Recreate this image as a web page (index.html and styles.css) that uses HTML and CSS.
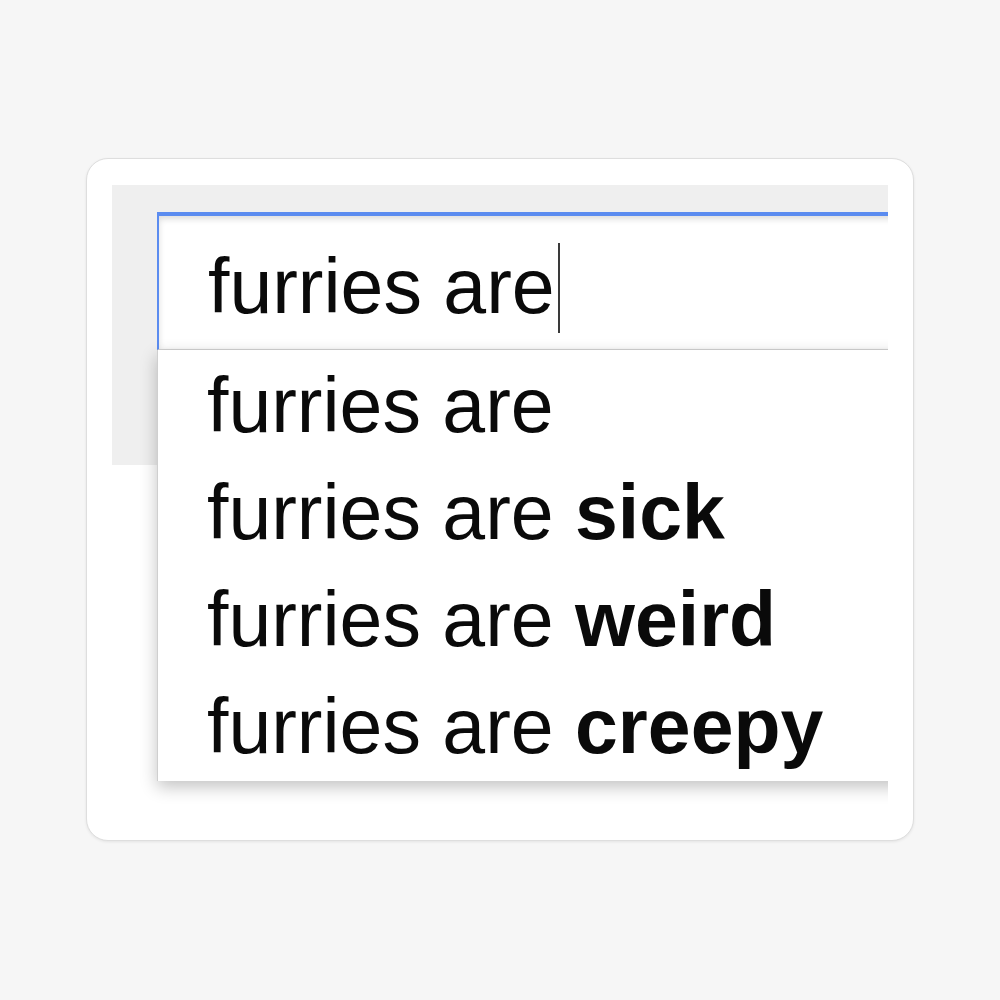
FILE: index.html
```html
<!DOCTYPE html>
<html lang="en">
<head>
  <meta charset="UTF-8">
  <title>furries are</title>
  <link rel="stylesheet" href="styles.css">
</head>
<body>
  <div class="sticker">
    <div class="shot">
      <div class="search">
        <div class="search-input">furries are<span class="caret"></span></div>
        <ul class="suggestions">
          <li>furries are</li>
          <li>furries are <b>sick</b></li>
          <li>furries are <b>weird</b></li>
          <li>furries are <b>creepy</b></li>
        </ul>
      </div>
    </div>
  </div>
</body>
</html>
```

FILE: styles.css
```css
body {
  margin: 0;
  height: 100vh;
  display: flex;
  justify-content: center;
  align-items: center;
  background: #f6f6f6;
  font-family: "Liberation Sans", Arial, sans-serif;
}

.sticker {
  box-sizing: border-box;
  width: 828px;
  height: 683px;
  margin-top: -1px;
  padding: 26px 25px 0;
  background: #fff;
  border: 1px solid #dedede;
  border-radius: 22px;
  box-shadow: 0 1px 3px rgba(0, 0, 0, 0.08);
}

.shot {
  height: 640px;
  padding: 27px 0 0 45px;
  box-sizing: border-box;
  overflow: hidden;
  background: linear-gradient(#efefef 0, #efefef 280px, #fff 280px);
}

.search {
  width: 780px;
  color: #0a0a0a;
  font-size: 77px;
}

.search-input {
  box-sizing: border-box;
  height: 138px;
  padding: 17px 0 0 49px;
  line-height: 107px;
  background: #fff;
  border-top: 4px solid #5b8cf0;
  border-left: 2px solid #5b8cf0;
  border-bottom: 1px solid #d2d2d2;
  box-shadow: inset 0 3px 6px rgba(0, 0, 0, 0.14);
}

.caret {
  display: inline-block;
  width: 2px;
  height: 90px;
  margin-left: 3px;
  vertical-align: -20px;
  background: #3a3a3a;
}

.suggestions {
  list-style: none;
  margin: 0;
  padding: 2px 0 1px 49px;
  background: #fff;
  border-left: 1px solid #cfcfcf;
  box-shadow: 0 6px 16px rgba(0, 0, 0, 0.24);
}

.suggestions li {
  line-height: 107px;
  white-space: nowrap;
}
```
